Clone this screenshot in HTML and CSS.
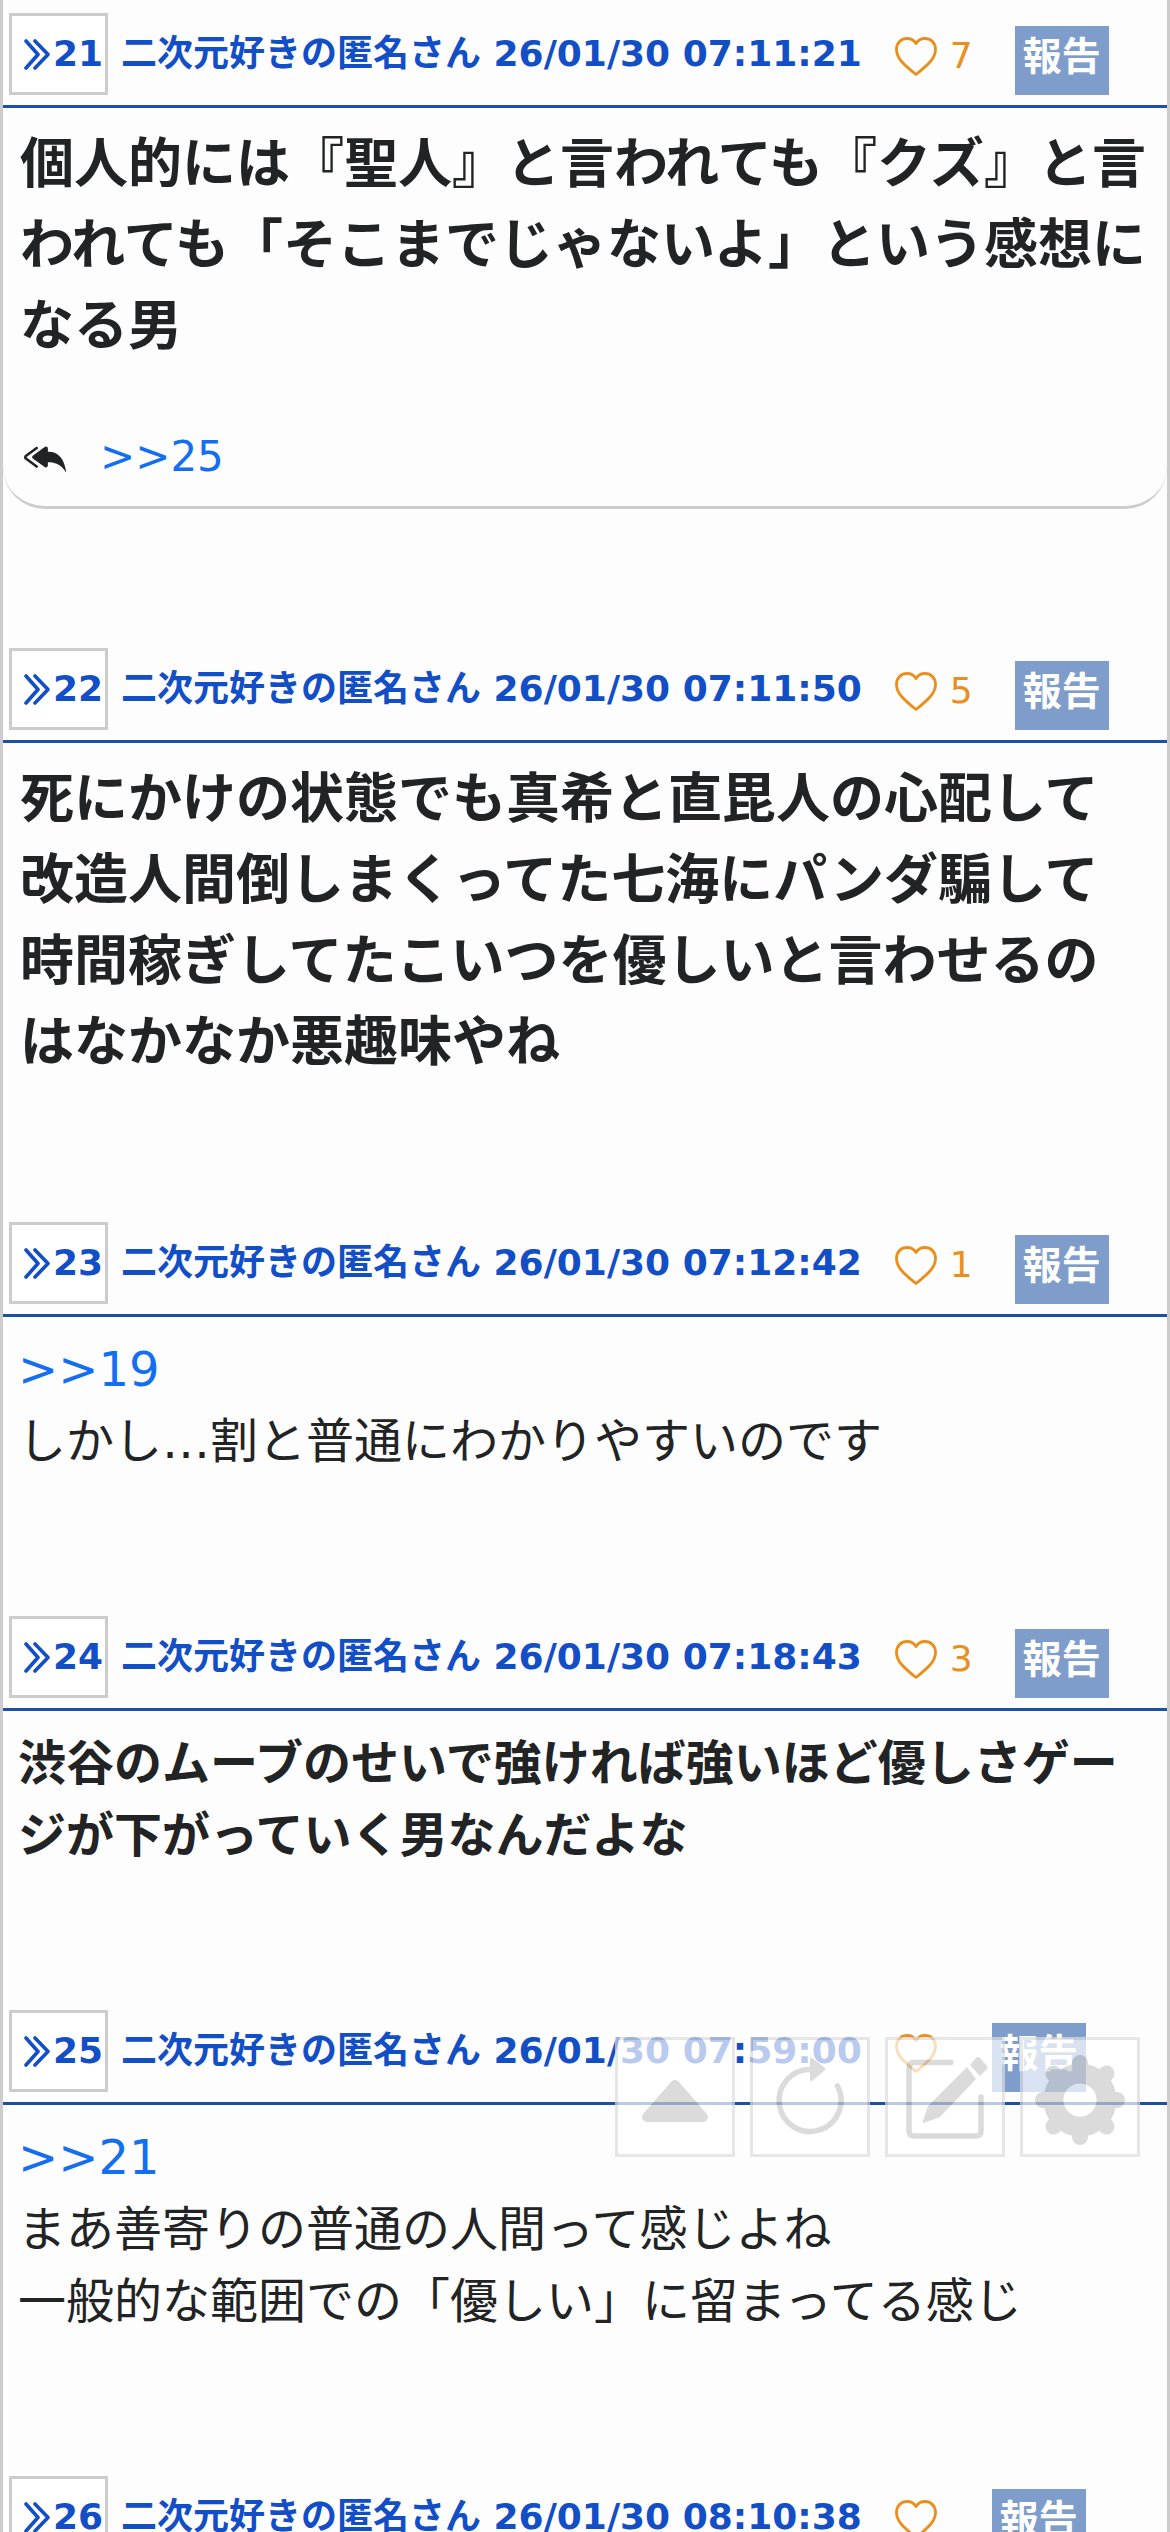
FILE: index.html
```html
<!DOCTYPE html>
<html lang="ja">
<head>
<meta charset="utf-8">
<meta name="viewport" content="width=device-width">
<title>二次元好きの匿名さん</title>
<link rel="stylesheet" href="styles.css">
</head>
<body>
<svg class="defs" aria-hidden="true">
  <symbol id="quote" viewBox="0 0 26 31"><path d="M2 2l12 13.500L2 29M11 2l13 13.500L11 29" fill="none" stroke="currentColor" stroke-width="3.600" stroke-linecap="round" stroke-linejoin="round"/></symbol>
  <symbol id="heart" viewBox="0 0 42 39"><path d="M21 37.500C8 27 1.500 21 1.500 12.500C1.500 5.500 6.500 1.500 12 1.500C16 1.500 19 3 21 6.500C23 3 26 1.500 30 1.500C35.500 1.500 40.500 5.500 40.500 12.500C40.500 21 34 27 21 37.500Z" fill="none" stroke="currentColor" stroke-width="2.800" stroke-linejoin="round"/></symbol>
</svg>
<main class="thread">
  <article class="post post--replied">
    <header class="post-head">
      <a class="num" href="#21"><svg class="quote"><use href="#quote"/></svg>21</a>
      <span class="meta">二次元好きの匿名さん <time>26/01/30 07:11:21</time></span>
      <button class="like" aria-label="いいね"><svg class="heart"><use href="#heart"/></svg><span>7</span></button>
      <button class="report">報告</button>
    </header>
    <p class="text text--large">個人的には『聖人』と言われても『クズ』と言われても「そこまでじゃないよ」という感想になる男</p>
    <div class="replies">
      <svg class="reply" viewBox="0 0 16 16" aria-hidden="true"><path d="M8.021 11.9 3.453 8.620a.719.719 0 0 1 0-1.238L8.021 4.100a.716.716 0 0 1 1.079.619V6c1.500 0 6 0 7 8-2.500-4.500-7-4-7-4v1.281c0 .56-.606.898-1.079.62z"/><path d="M5.232 4.293a.5.5 0 0 1-.106.7L1.114 7.945a.5.5 0 0 1-.042.028.147.147 0 0 0 0 .252.503.503 0 0 1 .042.028l4.012 2.954a.5.5 0 1 1-.593.805L.539 9.073a1.147 1.147 0 0 1 0-1.946l3.994-2.940a.5.5 0 0 1 .699.106z"/></svg>
      <a href="#25">&gt;&gt;25</a>
    </div>
  </article>

  <article class="post">
    <header class="post-head">
      <a class="num" href="#22"><svg class="quote"><use href="#quote"/></svg>22</a>
      <span class="meta">二次元好きの匿名さん <time>26/01/30 07:11:50</time></span>
      <button class="like" aria-label="いいね"><svg class="heart"><use href="#heart"/></svg><span>5</span></button>
      <button class="report">報告</button>
    </header>
    <p class="text text--large">死にかけの状態でも真希と直毘人の心配して<br>改造人間倒しまくってた七海にパンダ騙して<br>時間稼ぎしてたこいつを優しいと言わせるの<br>はなかなか悪趣味やね</p>
  </article>

  <article class="post">
    <header class="post-head">
      <a class="num" href="#23"><svg class="quote"><use href="#quote"/></svg>23</a>
      <span class="meta">二次元好きの匿名さん <time>26/01/30 07:12:42</time></span>
      <button class="like" aria-label="いいね"><svg class="heart"><use href="#heart"/></svg><span>1</span></button>
      <button class="report">報告</button>
    </header>
    <p class="text"><a href="#19">&gt;&gt;19</a><br>しかし…割と普通にわかりやすいのです</p>
  </article>

  <article class="post">
    <header class="post-head">
      <a class="num" href="#24"><svg class="quote"><use href="#quote"/></svg>24</a>
      <span class="meta">二次元好きの匿名さん <time>26/01/30 07:18:43</time></span>
      <button class="like" aria-label="いいね"><svg class="heart"><use href="#heart"/></svg><span>3</span></button>
      <button class="report">報告</button>
    </header>
    <p class="text text--bold">渋谷のムーブのせいで強ければ強いほど優しさゲージが下がっていく男なんだよな</p>
  </article>

  <article class="post">
    <header class="post-head">
      <a class="num" href="#25"><svg class="quote"><use href="#quote"/></svg>25</a>
      <span class="meta">二次元好きの匿名さん <time>26/01/30 07:59:00</time></span>
      <button class="like" aria-label="いいね"><svg class="heart"><use href="#heart"/></svg></button>
      <button class="report">報告</button>
    </header>
    <p class="text"><a href="#21">&gt;&gt;21</a><br>まあ善寄りの普通の人間って感じよね<br>一般的な範囲での「優しい」に留まってる感じ</p>
  </article>

  <article class="post">
    <header class="post-head">
      <a class="num" href="#26"><svg class="quote"><use href="#quote"/></svg>26</a>
      <span class="meta">二次元好きの匿名さん <time>26/01/30 08:10:38</time></span>
      <button class="like" aria-label="いいね"><svg class="heart"><use href="#heart"/></svg></button>
      <button class="report">報告</button>
    </header>
  </article>
</main>

<nav class="tools">
  <button class="tool" aria-label="トップへ"><svg viewBox="0 0 120 120"><path d="M60 48L32 80H88Z" fill="currentColor" stroke="currentColor" stroke-width="10" stroke-linejoin="round"/></svg></button>
  <button class="tool" aria-label="更新"><svg viewBox="0 0 120 120"><path d="M87.500 49A31 31 0 1 1 61 32.500" fill="none" stroke="currentColor" stroke-width="5.500" stroke-linecap="round"/><path d="M62 21L75 31Q76 32 75 33L62 44Q60 45 60 43V22Q60 19 62 21Z" fill="currentColor"/></svg></button>
  <button class="tool" aria-label="書き込む"><svg viewBox="0 0 120 120"><path d="M66 25.500H29Q24 25.500 24 31V94Q24 99 29 99H91Q96 99 96 94V60" fill="none" stroke="currentColor" stroke-width="5.500" stroke-linecap="round"/><path d="M82 30L91 42L55 80L39 86Q37 86 38 84L43 69ZM85 28L91 21Q93 19 95 21L102 29Q103 31 102 32L95 39Z" fill="currentColor"/></svg></button>
  <button class="tool" aria-label="設定"><svg viewBox="0 0 120 120"><g fill="none" stroke="currentColor"><circle cx="60" cy="63" r="26.500" stroke-width="20"/><path d="M60 35V26M60 91V100M32 63H23M88 63H97M40 43L33.500 36.500M80 43L86.500 36.500M40 83L33.500 89.500M80 83L86.500 89.500" stroke-width="16" stroke-linecap="round"/></g></svg></button>
</nav>
</body>
</html>
```
FILE: styles.css
```css
* {
  box-sizing: border-box;
}

body {
  margin: 0;
  background: #fdfdfd;
  color: #212324;
  font-family: "DejaVu Sans", "Noto Sans CJK JP", sans-serif;
  font-size: 48px;
  line-height: 72px;
}

a {
  color: #146ff0;
  text-decoration: none;
}

button {
  padding: 0;
  border: 0;
  background: none;
  font: inherit;
  cursor: pointer;
}

svg {
  display: block;
  flex: none;
}

.defs {
  display: none;
}

.thread {
  height: 100vh;
  overflow: hidden;
  padding-top: 13px;
  border: solid #ccc;
  border-width: 0 3px;
}

.post {
  margin-bottom: 139px;
}

.post--replied {
  padding-bottom: 18px;
  border-bottom: 3px solid #ccc;
  border-radius: 0 0 42px 42px;
}

.post-head {
  display: flex;
  align-items: center;
  padding: 0 6px 10px;
  border-bottom: 3px solid #1b4fac;
  color: #124ec6;
  font-size: 36px;
  line-height: 54px;
  white-space: nowrap;
}

.num {
  display: flex;
  flex: none;
  align-items: center;
  gap: 3px;
  width: 99px;
  height: 82px;
  padding-left: 12px;
  border: 3px solid #ccc;
  background: #fff;
  color: inherit;
  font-weight: bold;
}

.quote {
  width: 26px;
  height: 31px;
}

.meta {
  margin-left: 13px;
  font-weight: bold;
}

.like {
  display: flex;
  align-items: center;
  margin-left: 33px;
  padding-top: 4px;
  color: #ea8f1b;
}

.heart {
  margin-right: 13px;
  width: 42px;
  height: 39px;
}

.report {
  align-self: flex-end;
  height: 69px;
  margin-left: 42px;
  padding: 0 8px 8px;
  background: #7f9dcb;
  color: #fff;
  font-size: 39px;
  font-weight: bold;
}

.text {
  margin: 0;
  padding: 16px 15px 0;
}

.text--bold {
  font-weight: bold;
}

.text--large {
  padding: 16px 13px 0 17px;
  font-size: 54px;
  font-weight: bold;
  line-height: 81px;
}

.replies {
  display: flex;
  align-items: center;
  gap: 34px;
  margin-top: 58px;
  padding-left: 21px;
  font-size: 42px;
  line-height: 63px;
}

.reply {
  width: 42px;
  height: 42px;
  fill: currentColor;
}

.tools {
  position: fixed;
  right: 30px;
  bottom: 375px;
  display: flex;
  gap: 15px;
}

.tool {
  width: 120px;
  height: 120px;
  border: 3px solid #dcdcdc;
  background: #fff;
  color: #ccc;
  opacity: 0.7;
}

.tool svg {
  margin: -3px;
  width: 120px;
  height: 120px;
}
```
